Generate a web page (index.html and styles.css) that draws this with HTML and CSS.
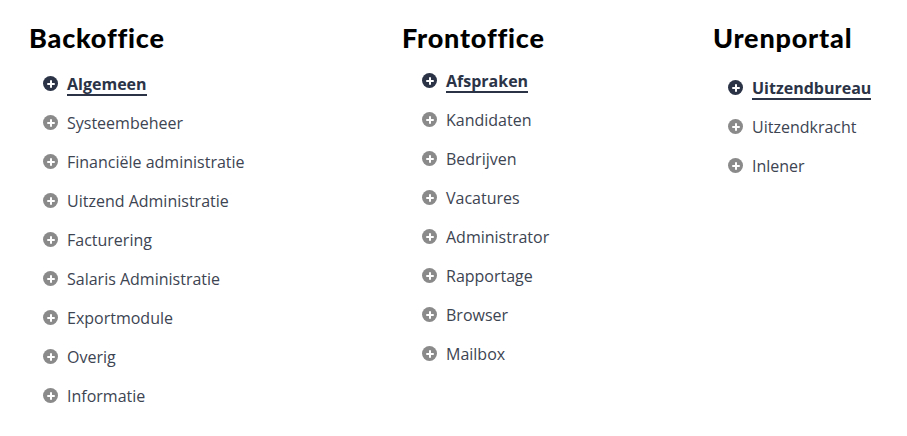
FILE: index.html
```html
<!DOCTYPE html>
<html lang="nl">
<head>
    <meta charset="UTF-8">
    <meta name="viewport" content="width=device-width, initial-scale=1.0">
    <title>Modules</title>
    <link rel="stylesheet" href="styles.css">
</head>
<body>
    <div class="container">
        <div class="column column-back">
            <h2>Backoffice</h2>
            <ul class="menu">
                <li class="active"><span class="icon"></span><a href="#">Algemeen</a></li>
                <li><span class="icon"></span><a href="#">Systeembeheer</a></li>
                <li><span class="icon"></span><a href="#">Financiële administratie</a></li>
                <li><span class="icon"></span><a href="#">Uitzend Administratie</a></li>
                <li><span class="icon"></span><a href="#">Facturering</a></li>
                <li><span class="icon"></span><a href="#">Salaris Administratie</a></li>
                <li><span class="icon"></span><a href="#">Exportmodule</a></li>
                <li><span class="icon"></span><a href="#">Overig</a></li>
                <li><span class="icon"></span><a href="#">Informatie</a></li>
            </ul>
        </div>

        <div class="column column-front">
            <h2>Frontoffice</h2>
            <ul class="menu">
                <li class="active"><span class="icon"></span><a href="#">Afspraken</a></li>
                <li><span class="icon"></span><a href="#">Kandidaten</a></li>
                <li><span class="icon"></span><a href="#">Bedrijven</a></li>
                <li><span class="icon"></span><a href="#">Vacatures</a></li>
                <li><span class="icon"></span><a href="#">Administrator</a></li>
                <li><span class="icon"></span><a href="#">Rapportage</a></li>
                <li><span class="icon"></span><a href="#">Browser</a></li>
                <li><span class="icon"></span><a href="#">Mailbox</a></li>
            </ul>
        </div>

        <div class="column column-uren">
            <h2>Urenportal</h2>
            <ul class="menu">
                <li class="active"><span class="icon"></span><a href="#">Uitzendbureau</a></li>
                <li><span class="icon"></span><a href="#">Uitzendkracht</a></li>
                <li><span class="icon"></span><a href="#">Inlener</a></li>
            </ul>
        </div>
    </div>
</body>
</html>
```

FILE: styles.css
```css
body {
    font-family: "Open Sans", Arial, sans-serif;
    background-color: #fff;
    color: #3d4452;
    margin: 0;
}
.container {
    display: flex;
    padding: 21px 0 0 29px;
}
.column-back {
    width: 373px;
}
.column-front {
    width: 311px;
}
h2 {
    margin: 0;
    font-family: Lato, Arial, sans-serif;
    font-size: 27px;
    line-height: 34px;
    font-weight: 900;
    letter-spacing: 0.8px;
    color: #000;
}
.menu {
    list-style: none;
    margin: 9px 0 0;
    padding: 0 0 0 14px;
}
.column-front .menu {
    margin-top: 6px;
    padding-left: 20px;
}
.column-uren .menu {
    margin-top: 13px;
    padding-left: 15px;
}
.menu li {
    display: flex;
    align-items: center;
    gap: 9px;
    height: 39px;
    font-size: 16px;
}
.menu a {
    color: #3d4452;
    text-decoration: none;
}
.icon {
    position: relative;
    width: 15px;
    height: 15px;
    border-radius: 50%;
    background-color: #8a8a8a;
    flex-shrink: 0;
}
.icon::before,
.icon::after {
    content: "";
    position: absolute;
    background-color: #fff;
    border-radius: 1px;
}
.icon::before {
    left: 3.5px;
    top: 6.5px;
    width: 8px;
    height: 2px;
}
.icon::after {
    left: 6.5px;
    top: 3.5px;
    width: 2px;
    height: 8px;
}
.active .icon {
    background-color: #2b3447;
}
.active a {
    color: #2b3447;
    font-weight: 700;
    border-bottom: 2px solid #2b3447;
    line-height: 20px;
    padding-top: 3px;
}
```
